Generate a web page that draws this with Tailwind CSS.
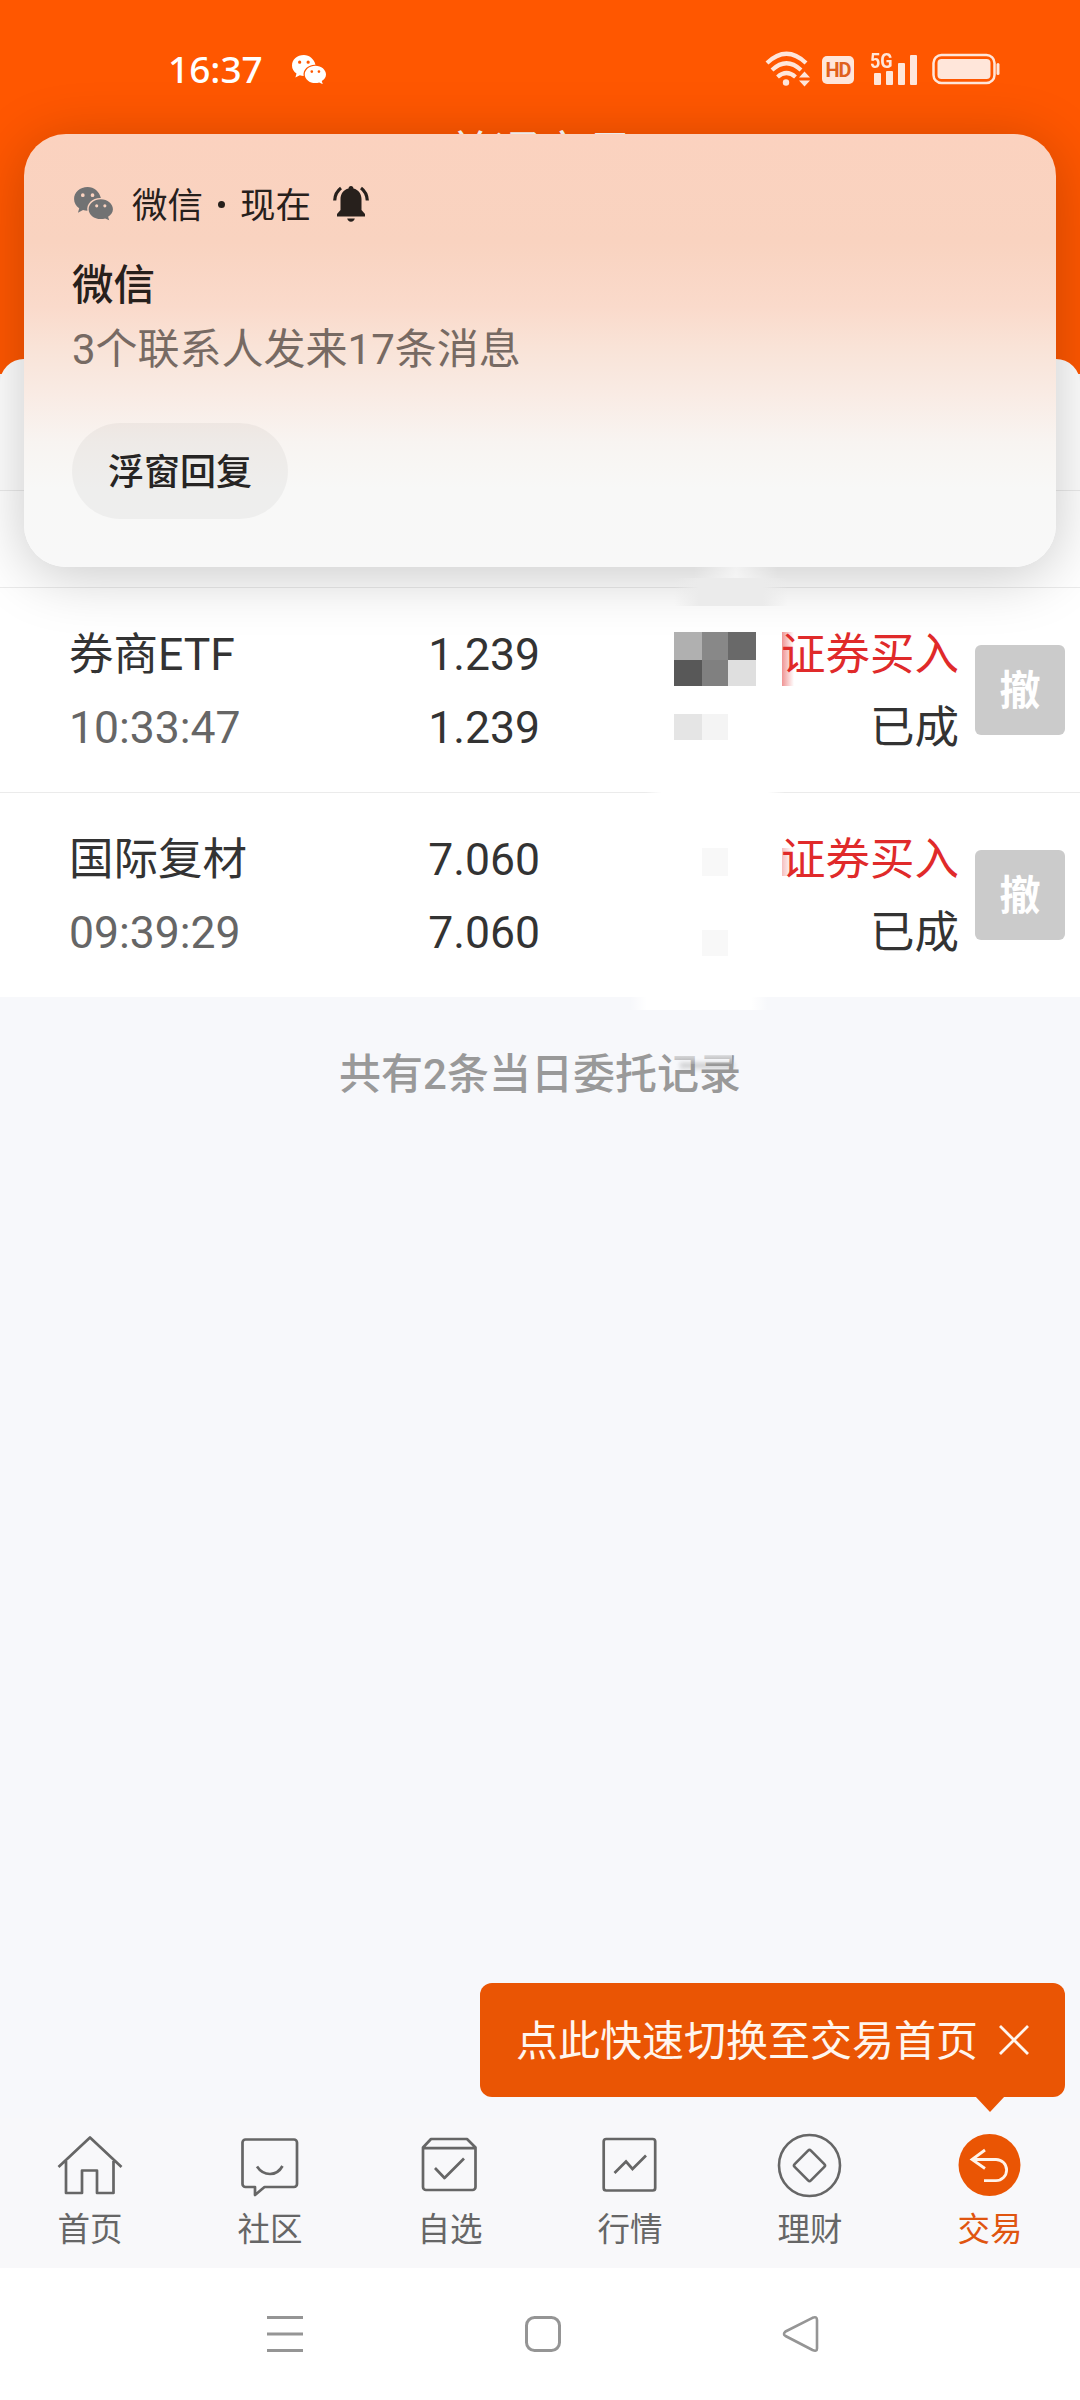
<!DOCTYPE html>
<html lang="zh-CN">
<head>
<meta charset="utf-8">
<title>普通交易</title>
<script src="https://cdn.jsdelivr.net/npm/@tailwindcss/browser@4"></script>
</head>
<body class="bg-white">
<div class="relative flex h-[2400px] w-[1080px] flex-col overflow-hidden bg-[#f7f8fb] font-['Roboto','Noto_Sans_CJK_SC',sans-serif] text-[#333]">

  <!-- App header with status bar -->
  <header class="flex h-[374px] shrink-0 flex-col bg-[#ff5700]">
    <div class="flex h-[138px] shrink-0 items-center justify-between pr-[80px] pl-[168px]">
      <div class="flex items-center gap-[28px] text-white">
        <span class="w-[96px] pb-[2px] font-['Noto_Sans'] text-[37px] leading-none font-medium whitespace-nowrap">16:37</span>
        <svg class="h-[29px] w-[34px]" viewBox="0 0 40 34" fill="currentColor">
          <path fill-rule="evenodd" d="M14 0C6 0 0 5.400 0 12.300c0 4 2 7.200 5.300 9.500L4 26.500l5.200-2.700c1.500.4 3 .7 4.500.7C12.500 17 19 11 27.600 11.300 26 4.800 20.500 0 14 0ZM9 6.500a1.900 1.900 0 1 1 0 3.800 1.900 1.900 0 0 1 0-3.800ZM19 6.500a1.900 1.900 0 1 1 0 3.800 1.900 1.900 0 0 1 0-3.800Z"/>
          <path fill-rule="evenodd" d="M27.500 12.500c-7 0-12.500 4.700-12.500 10.300S20.500 33 27.500 33c1.600 0 3.100-.2 4.500-.7l4.200 2-1.200-3.800c3-1.800 5-4.600 5-7.700 0-5.600-5.500-10.300-12.500-10.300ZM23.300 17.800a1.600 1.600 0 1 1 0 3.200 1.600 1.600 0 0 1 0-3.200ZM31.700 17.800a1.600 1.600 0 1 1 0 3.200 1.600 1.600 0 0 1 0-3.200Z"/>
        </svg>
      </div>
      <div class="flex items-center text-[#ffe6da]">
        <svg class="h-[36px] w-[45px]" viewBox="0 0 45 36" fill="none" stroke="currentColor" stroke-width="4.200">
          <path d="M2 12Q21.500-6.500 41 12"/><path d="M7 19Q21.500 5.500 36 19"/><path d="M12.500 26Q21.500 18 30.500 26"/>
          <g fill="currentColor" stroke="none"><circle cx="21" cy="31.500" r="3.200"/><path d="M34 26.500h11l-5.500-6zM34 29.500h11l-5.500 6z"/></g>
        </svg>
        <span class="mt-[2px] ml-[12px] flex h-[28px] w-[32px] items-center justify-center rounded-[5px] bg-[#ffe6da] text-[20px] leading-none font-bold tracking-[-1px] text-[#e0601c]">HD</span>
        <div class="ml-[17px] flex h-[32px] w-[46px] items-end">
          <div class="relative flex h-[32px] w-[46px] items-end justify-end gap-[5px]">
            <span class="absolute -top-[4px] -left-[1px] origin-left scale-x-90 text-[20px] leading-[24px] font-bold">5G</span>
            <i class="h-[12px] w-[7px] rounded-[1px] bg-current"></i><i class="h-[14px] w-[7px] rounded-[1px] bg-current"></i><i class="h-[22px] w-[7px] rounded-[1px] bg-current"></i><i class="h-[30px] w-[7px] rounded-[1px] bg-current"></i>
          </div>
        </div>
        <svg class="ml-[15px] h-[32px] w-[68px]" viewBox="0 0 68 32">
          <rect x="1.500" y="2" width="61" height="28" rx="8" fill="none" stroke="currentColor" stroke-width="2.500"/>
          <rect x="5.500" y="6" width="53" height="20" rx="4" fill="currentColor"/>
          <rect x="64.500" y="10" width="3" height="12" rx="1.500" fill="currentColor"/>
        </svg>
      </div>
    </div>
    <h1 class="-mt-[12px] text-center text-[46.500px] leading-[56px] text-white">普通交易</h1>
  </header>

  <!-- Order list sheet -->
  <main class="-mt-[15px] flex shrink-0 flex-col rounded-t-[24px] bg-white">
    <div class="h-[132px] border-b border-[#ebebeb]"></div>
    <div class="h-[97px] border-b border-[#ebebeb]"></div>

    <section class="flex h-[205px] items-center border-b border-[#ebebeb] pr-[15px] pl-[69px] text-[44.500px] leading-[73px]">
      <div class="w-[230px] pt-[3px]"><p>券商ETF</p><p class="text-[#666]">10:33:47</p></div>
      <div class="w-[241px] pt-[3px] text-right"><p>1.239</p><p>1.239</p></div>
      <div class="flex-1 pt-[3px] text-right"><p class="text-[#e02a2a]">证券买入</p><p>已成</p></div>
      <button class="ml-[16px] size-[90px] rounded-[6px] bg-[#cbcbcb] pt-[3px] text-[41px] leading-none font-bold text-white">撤</button>
    </section>
    <section class="flex h-[204px] items-center pr-[15px] pl-[69px] text-[44.500px] leading-[73px]">
      <div class="w-[230px] pt-[4px]"><p>国际复材</p><p class="text-[#666]">09:39:29</p></div>
      <div class="w-[241px] pt-[4px] text-right"><p>7.060</p><p>7.060</p></div>
      <div class="flex-1 pt-[4px] text-right"><p class="text-[#e02a2a]">证券买入</p><p>已成</p></div>
      <button class="ml-[16px] size-[90px] rounded-[6px] bg-[#cbcbcb] pt-[3px] text-[41px] leading-none font-bold text-white">撤</button>
    </section>
  </main>
  <p class="mt-[46px] text-center text-[42px] leading-[64px] font-medium text-[#999]">共有2条当日委托记录</p>

  <!-- Tab bar -->
  <nav class="mt-auto grid h-[150px] shrink-0 grid-cols-6 bg-[#f8f8fa] text-[32.500px] leading-[44px] text-[#666]">
    <a class="flex flex-col items-center pt-[14px]">
      <svg class="size-[66px]" viewBox="0 0 66 66" fill="none" stroke="currentColor" stroke-width="2.700" stroke-linejoin="round"><path d="M1.500 35 33 5.500 64.500 35M9 29v32h16V38.500h15V61h16.500V29"/></svg>
      <span class="mt-[9.500px]">首页</span>
    </a>
    <a class="flex flex-col items-center pt-[14px]">
      <svg class="size-[66px]" viewBox="0 0 66 66" fill="none" stroke="currentColor" stroke-width="2.700" stroke-linejoin="round"><path d="M8.500 7.500h48.500a3 3 0 0 1 3 3V52a3 3 0 0 1-3 3H27.500L18 63v-8H8.500a3 3 0 0 1-3-3V10.500a3 3 0 0 1 3-3Z"/><path d="M20 34.500q5 7.500 13 7.500t12.500-8"/></svg>
      <span class="mt-[9.500px]">社区</span>
    </a>
    <a class="flex flex-col items-center pt-[14px]">
      <svg class="size-[66px]" viewBox="0 0 66 66" fill="none" stroke="currentColor" stroke-width="2.700" stroke-linejoin="round"><path d="M6 15.500 14 7h36l8.500 8.500V55a3 3 0 0 1-3 3H9a3 3 0 0 1-3-3ZM6 16.200h52.500M18 36l9.500 10L47 26.500"/></svg>
      <span class="mt-[9.500px]">自选</span>
    </a>
    <a class="flex flex-col items-center pt-[14px]">
      <svg class="size-[66px]" viewBox="0 0 66 66" fill="none" stroke="currentColor" stroke-width="2.700"><rect x="6.700" y="7" width="51.500" height="51.500" rx="2.500"/><path d="M17.500 41 29 29.500l6.500 7.500L49 23.500"/></svg>
      <span class="mt-[9.500px]">行情</span>
    </a>
    <a class="flex flex-col items-center pt-[14px]">
      <svg class="size-[66px]" viewBox="0 0 66 66" fill="none" stroke="currentColor" stroke-width="2.600"><circle cx="32.500" cy="33.500" r="30.500"/><rect x="21" y="22" width="23" height="23" rx="2" transform="rotate(45 32.500 33.500)"/></svg>
      <span class="mt-[9.500px]">理财</span>
    </a>
    <a class="flex flex-col items-center pt-[14px] text-[#e05510]">
      <svg class="size-[66px]" viewBox="0 0 66 66" fill="none" stroke="#fff3ea" stroke-width="2.800"><circle cx="32.500" cy="33" r="31" fill="#ea5504" stroke="none"/><path d="M28 18 15 27.500 28 36.500M15 27.500h24a10.600 10.600 0 0 1 0 21.200H27"/></svg>
      <span class="mt-[9.500px]">交易</span>
    </a>
  </nav>

  <!-- System navigation -->
  <nav class="flex h-[132px] shrink-0 items-center bg-white pl-[266px] text-[#959595]">
    <svg class="h-[40px] w-[38px]" viewBox="0 0 38 40" stroke="currentColor" stroke-width="3"><path d="M1 3.500h36M1 20h36M1 36.500h36"/></svg>
    <svg class="ml-[219px] size-[40px]" viewBox="0 0 40 40" fill="none" stroke="currentColor" stroke-width="3"><rect x="3.500" y="3.500" width="33" height="33" rx="8"/></svg>
    <svg class="ml-[219px] size-[38px]" viewBox="0 0 38 38" fill="none" stroke="currentColor" stroke-width="2.600" stroke-linejoin="round"><path d="M3.500 16.500 30.500 2.800Q35 1 35 5V33.500Q35 37 30.500 35L3.500 21Q.5 19 3.500 16.500Z"/></svg>
  </nav>

  <!-- Notification shade card -->
  <article class="absolute top-[134px] left-[24px] flex h-[433px] w-[1032px] flex-col items-start rounded-[42px] bg-[linear-gradient(180deg,#fbd2bf_0%,#f9d3c0_25%,#fadacb_40%,#f9e3d7_49%,#f9ebe4_60%,#f8f4f1_71%,#f8f8f7_82%,#f8f8f8_100%)] pl-[48px] text-[#27201c] shadow-[0_8px_60px_rgba(0,0,0,0.22)]">
    <div class="mt-[46px] flex h-[48px] items-center text-[35.500px] leading-[48px]">
      <svg class="mr-[19px] ml-[2px] h-[34px] w-[39px] text-[#717273]" viewBox="0 0 40 35" fill="currentColor">
        <path fill-rule="evenodd" d="M14 0C6 0 0 5.400 0 12.300c0 4 2 7.200 5.300 9.500L4 26.500l5.200-2.700c1.500.4 3 .7 4.500.7C12.500 17 19 11 27.600 11.300 26 4.800 20.500 0 14 0ZM9 6.500a1.900 1.900 0 1 1 0 3.800 1.900 1.900 0 0 1 0-3.800ZM19 6.500a1.900 1.900 0 1 1 0 3.800 1.900 1.900 0 0 1 0-3.800Z"/>
        <path fill-rule="evenodd" d="M27.500 12.500c-7 0-12.500 4.700-12.500 10.300S20.500 33 27.500 33c1.600 0 3.100-.2 4.500-.7l4.200 2-1.200-3.800c3-1.800 5-4.600 5-7.700 0-5.600-5.500-10.300-12.500-10.300ZM23.300 17.800a1.600 1.600 0 1 1 0 3.200 1.600 1.600 0 0 1 0-3.200ZM31.700 17.800a1.600 1.600 0 1 1 0 3.200 1.600 1.600 0 0 1 0-3.200Z"/>
      </svg>
      <span class="pt-[3px]">微信</span>
      <span class="mx-[15px] size-[7px] rounded-full bg-[#27201c]"></span>
      <span class="pt-[3px]">现在</span>
      <svg class="ml-[22px] h-[36px] w-[36px]" viewBox="0 0 36 36" fill="currentColor">
        <path d="M18 0c1.600 0 2.300 1 2.500 2.500C25.500 3.800 28.500 8 28.500 13v11l3.500 4v2.500H4V28l3.500-4V13c0-5 3-9.200 8-10.500C15.700 1 16.400 0 18 0ZM14.200 32.500h7.600c-.4 2-1.800 3.200-3.800 3.200s-3.400-1.200-3.800-3.200Z"/>
        <path d="M8 2Q2 6.500 1.700 14.500M28 2q6 4.500 6.300 12.500" fill="none" stroke="currentColor" stroke-width="3.200"/>
      </svg>
    </div>
    <h2 class="mt-[28px] text-[41.500px] leading-[60px] font-medium">微信</h2>
    <p class="mt-[4px] text-[42px] leading-[60px] whitespace-nowrap text-[#776a63]">3个联系人发来17条消息</p>
    <button class="mt-[43px] h-[96px] w-[216px] rounded-full bg-black/4 pt-[4px] text-[36px] leading-none font-medium text-[#262423]">浮窗回复</button>
  </article>

  <!-- Mosaic over the amount column -->
  <div class="absolute top-[567px] left-[694px] h-[11px] w-[84px] bg-linear-to-r from-white/0 via-white/60 to-white/0"></div>
  <div class="absolute top-[578px] left-[674px] h-[28px] w-[114px] bg-[linear-gradient(90deg,transparent,#ebebeb_22%,#ebebeb_78%,transparent)]"></div>
  <div class="absolute top-[632px] left-[674px] grid grid-cols-[28px_26px_28px] grid-rows-[28px_26px]">
    <i class="bg-[#b0b0b0]"></i><i class="bg-[#888]"></i><i class="bg-[#696969]"></i>
    <i class="bg-[#585858]"></i><i class="bg-[#808080]"></i><i class="bg-[#dfdfdf]"></i>
  </div>
  <div class="absolute top-[632px] left-[782px] h-[54px] w-[12px] bg-linear-to-r from-[#e02a2a]/50 to-[#e02a2a]/0"></div>
  <div class="absolute top-[714px] left-[674px] grid h-[26px] grid-cols-[28px_26px]"><i class="bg-[#e5e5e5]"></i><i class="bg-[#f4f4f4]"></i></div>
  <div class="absolute top-[790px] left-[645px] h-[4px] w-[140px] bg-[linear-gradient(90deg,transparent,#fff_12%,#fff_88%,transparent)]"></div>
  <div class="absolute top-[848px] left-[702px] h-[28px] w-[26px] bg-[#f8f8f8]"></div>
  <div class="absolute top-[848px] left-[782px] h-[28px] w-[10px] bg-linear-to-r from-[#e02a2a]/30 to-[#e02a2a]/0"></div>
  <div class="absolute top-[930px] left-[702px] h-[26px] w-[26px] bg-[#f8f8f8]"></div>
  <div class="absolute top-[996px] left-[630px] h-[14px] w-[138px] bg-[linear-gradient(90deg,transparent,#fff_12%,#fff_88%,transparent)]"></div>
  <div class="absolute top-[1053px] left-[672px] h-[11px] w-[60px] bg-linear-to-b from-[#f7f8fb]/80 to-[#f7f8fb]/20"></div>
  <div class="absolute top-[1063px] left-[680px] h-[8px] w-[54px] bg-linear-to-b from-[#999]/60 to-[#999]/0 blur-[2px]"></div>

  <!-- Shortcut tooltip -->
  <aside class="absolute top-[1983px] left-[480px] flex h-[114px] w-[585px] items-center rounded-[12px] bg-[#ea5504] pl-[36px] text-[42px] text-[#fff6ee]">
    <span class="pt-[2px] whitespace-nowrap">点此快速切换至交易首页</span>
    <svg class="ml-[20px] size-[32px] shrink-0" viewBox="0 0 32 32" stroke="currentColor" stroke-width="2.800"><path d="M2 2l28 28M30 2 2 30"/></svg>
    <i class="absolute top-[113px] left-[495px] h-[16px] w-[30px] bg-[#ea5504] [clip-path:polygon(0_0,100%_0,50%_100%)]"></i>
  </aside>
</div>
</body>
</html>
